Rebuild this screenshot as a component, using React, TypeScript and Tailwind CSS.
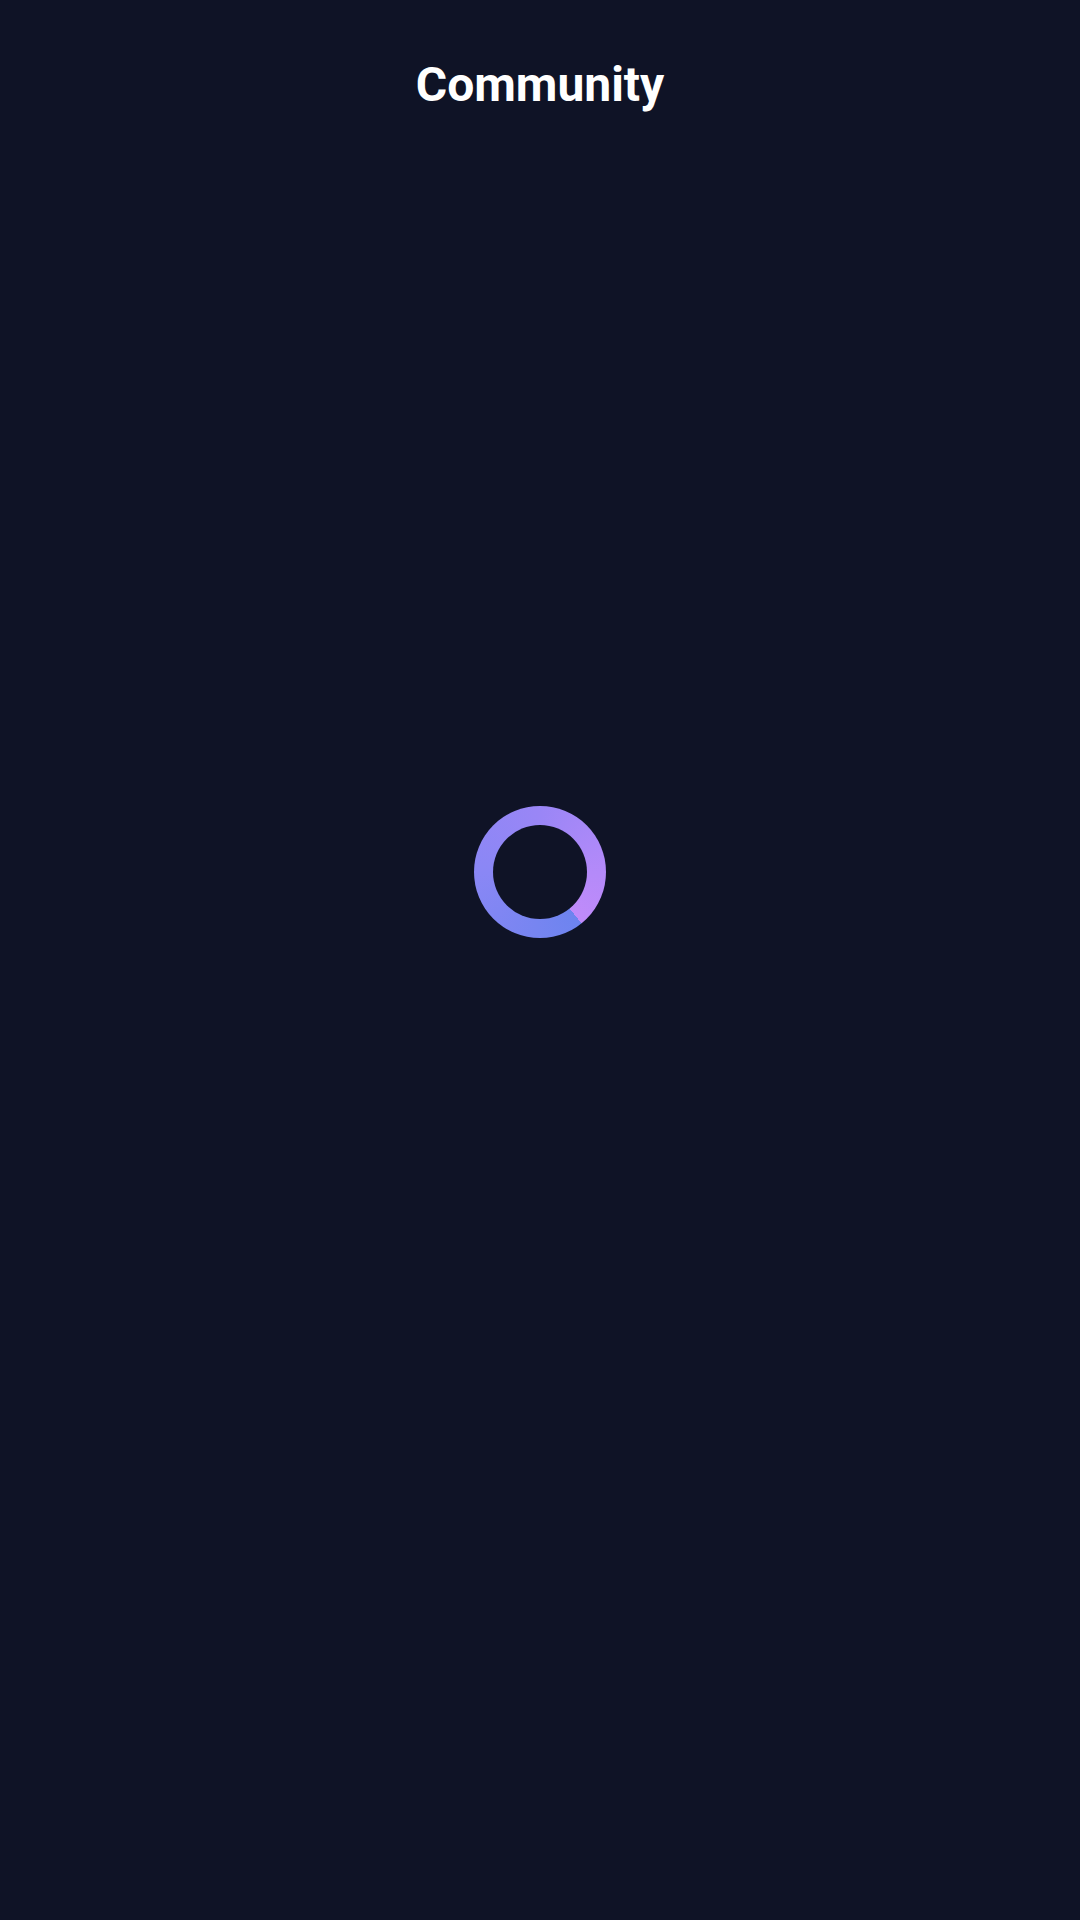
export default function App() {
  return (
    <div className="flex h-[1920px] w-full flex-col bg-[#0f1326] font-['Roboto',sans-serif]">
      <h1 className="pt-[57px] text-center text-[48px] font-bold leading-[56px] text-white">Community</h1>
      <div className="flex flex-1 items-start justify-center pt-[693px]">
        <div className="flex h-[132px] w-[132px] items-center justify-center rounded-full bg-[conic-gradient(from_141deg,#6d84ef,#8a87f5_36%,#9a86f6_61%,#b48af9_86%,#c08bfa)]">
          <div className="h-[94px] w-[94px] rounded-full bg-[#0f1326]" />
        </div>
      </div>
    </div>
  );
}
